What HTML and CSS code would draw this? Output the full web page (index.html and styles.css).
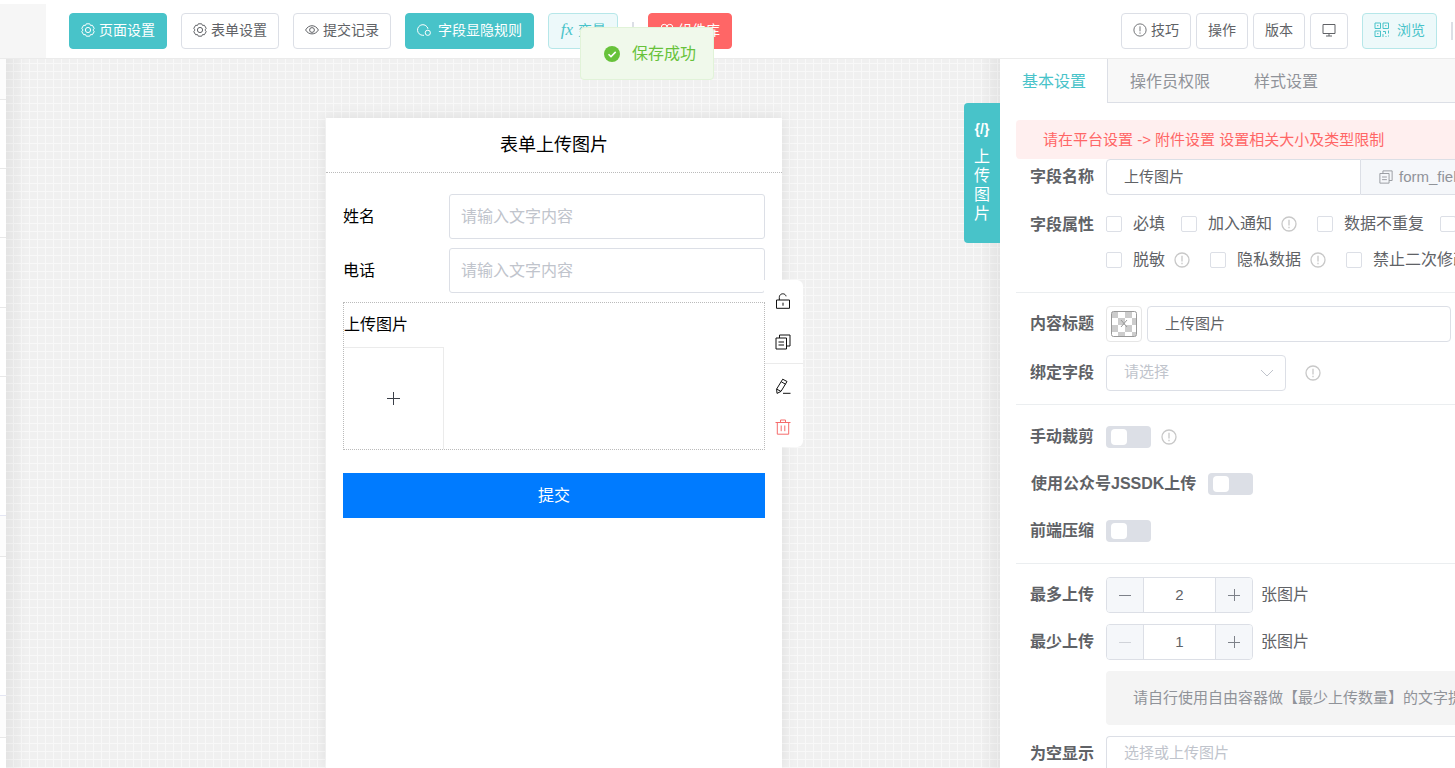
FILE: index.html
```html
<!DOCTYPE html>
<html lang="zh-CN">
<head>
<meta charset="utf-8">
<title>表单上传图片</title>
<link rel="stylesheet" href="styles.css">
</head>
<body>
<svg class="defs" aria-hidden="true">
  <symbol id="i-gear" viewBox="0 0 14 14"><path d="M5.300.8h3.400l.8 1.600 1.900-.1 1.800 3-1 1.500v.4l1 1.500-1.800 3-1.900-.1-.8 1.600H5.300l-.8-1.600-1.900.1-1.800-3 1-1.500v-.4l-1-1.500 1.800-3 1.900.1z"/><circle cx="7" cy="7" r="2.600"/></symbol>
  <symbol id="i-info" viewBox="0 0 16 16"><circle cx="8" cy="8" r="7"/><path d="M8 3.800v5.700M8 10.800v1.500"/></symbol>
  <symbol id="i-copy" viewBox="0 0 16 16"><path d="M1 4h10.500v11H1zM4.500 4V1H15v11h-3.500M3.500 8H9M3.500 11H9"/></symbol>
</svg>

<header class="topbar">
  <div class="corner"></div>
  <nav class="tools">
    <button class="btn primary"><svg class="ic"><use href="#i-gear"/></svg>页面设置</button>
    <button class="btn"><svg class="ic"><use href="#i-gear"/></svg>表单设置</button>
    <button class="btn"><svg class="ic" viewBox="0 0 14 14"><path d="M.6 7C3.600 1.300 10.400 1.300 13.400 7 10.400 12.200 3.600 12.200.6 7z"/><circle cx="7" cy="7" r="2.400"/></svg>提交记录</button>
    <button class="btn primary wide"><svg class="ic" viewBox="0 0 14 14"><path d="M7 12.300H5.800A5.300 5.300 0 1 1 11 5.800"/><circle cx="10.800" cy="9.800" r="2.600"/></svg>字段显隐规则</button>
    <button class="btn soft"><i class="fx">fx</i>变量</button>
    <span class="bar"></span>
    <button class="btn danger"><svg class="ic" viewBox="0 0 14 14"><circle cx="4.200" cy="4.200" r="2.900"/><circle cx="9.800" cy="4.200" r="2.900"/><circle cx="4.200" cy="9.800" r="2.900"/><circle cx="9.800" cy="9.800" r="2.900"/></svg>组件库</button>
  </nav>
  <nav class="actions">
    <button class="btn"><svg class="ic"><use href="#i-info"/></svg>技巧</button>
    <button class="btn">操作</button>
    <button class="btn">版本</button>
    <button class="btn" aria-label="预览"><svg class="ic" viewBox="0 0 14 14"><path d="M1 1.500h12v9H1zM7 10.500v2.500M4 13h6"/></svg></button>
    <button class="btn soft browse"><svg class="ic qr" viewBox="0 0 16 16"><path d="M1 1h5.500v5.500H1zM9 1h5.500v5.500H9zM1 9h5.500v5.500H1zM3 3.700h1.500M11 3.700h1.500M3 11.700h1.500M9 9.500h2.500v2.500M14.500 8.500v3M9 12v3M11.500 14.500h1M14 14h1"/></svg>浏览</button>
    <span class="bar"></span>
  </nav>
</header>

<div class="toast" role="status"><svg viewBox="0 0 16 16"><circle cx="8" cy="8" r="8"/><path d="M4.500 8.200 7 10.600l4.700-4.700"/></svg>保存成功</div>

<div class="work">
  <aside class="strip"></aside>
  <main class="canvas">
    <section class="phone">
      <h1>表单上传图片</h1>
      <form class="form">
        <div class="line"><label for="name">姓名</label><input id="name" placeholder="请输入文字内容"></div>
        <div class="line"><label for="tel">电话</label><input id="tel" placeholder="请输入文字内容"></div>
        <div class="picked">
          <span class="caption">上传图片</span>
          <button type="button" class="upload" aria-label="添加图片"><svg viewBox="0 0 13 13"><path d="M6.500 0v13M0 6.500h13"/></svg></button>
          <div class="menu">
            <button type="button" aria-label="锁定"><svg viewBox="0 0 16 16"><path d="M1.500 7h13v8.300h-13zM4.300 7V4.500C4.300-.2 10.500-.2 11 3.300M8 9.700v3"/></svg></button>
            <button type="button" aria-label="复制"><svg><use href="#i-copy"/></svg></button>
            <hr>
            <button type="button" aria-label="编辑"><svg viewBox="0 0 16 16"><path d="M7.700 1.200 12 3.500 6 13.400l-4 2-.4-4.300zM6.300 3.800l4.200 2.400M1.600 11.100 6 13.400M8 15.300h7.500"/></svg></button>
            <button type="button" class="del" aria-label="删除"><svg viewBox="0 0 16 16"><path d="M.5 3.500h15M2.300 3.500v11.700h11.400V3.500M5.500 3.300V1h5v2.300M6.200 6.500v5.700M9.800 6.500v5.700"/></svg></button>
          </div>
        </div>
        <button type="button" class="submit">提交</button>
      </form>
    </section>
    <div class="tag"><b>{/}</b><span>上传图片</span></div>
  </main>

  <aside class="panel">
    <div class="tabs">
      <button class="on">基本设置</button><button>操作员权限</button><button>样式设置</button>
    </div>
    <div class="settings">
      <p class="warn">请在平台设置 -&gt; 附件设置 设置相关大小及类型限制</p>

      <div class="group first">
        <div class="row">
          <label class="lb" for="fname">字段名称</label>
          <div class="joined"><input id="fname" class="box" value="上传图片"><span class="addon"><svg class="ic"><use href="#i-copy"/></svg>form_field</span></div>
        </div>
        <div class="row">
          <span class="lb">字段属性</span>
          <div class="checks">
            <div class="checkline">
              <label><input type="checkbox">必填</label>
              <label><input type="checkbox">加入通知</label><svg class="tip"><use href="#i-info"/></svg>
              <label><input type="checkbox">数据不重复</label>
              <label><input type="checkbox" aria-label="其他"></label>
            </div>
            <div class="checkline">
              <label><input type="checkbox">脱敏</label><svg class="tip"><use href="#i-info"/></svg>
              <label><input type="checkbox">隐私数据</label><svg class="tip"><use href="#i-info"/></svg>
              <label><input type="checkbox">禁止二次修改</label>
            </div>
          </div>
        </div>
      </div>

      <div class="group loose">
        <div class="row">
          <label class="lb" for="title">内容标题</label>
          <button class="color" aria-label="颜色"><svg viewBox="0 0 26 26"><path class="chk" d="M1 1h6v6H1zM14 1h7v6h-7zM7 7h7v7H7zM21 7h4v7h-4zM1 14h6v7H1zM14 14h7v7h-7zM7 21h7v4H7zM21 21h4v4h-4z"/><rect x=".5" y=".5" width="25" height="25" rx="2"/><path d="m10 9 6 7M16 9l-6 7"/></svg></button>
          <input id="title" class="box title" value="上传图片">
        </div>
        <div class="row">
          <label class="lb" for="bind">绑定字段</label>
          <div class="select"><select id="bind"><option>请选择</option></select><svg viewBox="0 0 14 8"><path d="m1 1 6 6 6-6"/></svg></div>
          <svg class="tip far"><use href="#i-info"/></svg>
        </div>
      </div>

      <div class="group tight">
        <div class="row"><label class="lb" for="s1">手动裁剪</label><input id="s1" type="checkbox" role="switch" class="switch"><svg class="tip near"><use href="#i-info"/></svg></div>
        <div class="row"><label class="lb long" for="s2">使用公众号JSSDK上传</label><input id="s2" type="checkbox" role="switch" class="switch"></div>
        <div class="row"><label class="lb" for="s3">前端压缩</label><input id="s3" type="checkbox" role="switch" class="switch"></div>
      </div>

      <div class="group last">
        <div class="row"><label class="lb" for="max">最多上传</label>
          <div class="step"><button aria-label="减少"><svg viewBox="0 0 12 12"><path d="M0 6.500h12"/></svg></button><input id="max" value="2"><button aria-label="增加"><svg viewBox="0 0 12 12"><path d="M0 6.500h12M6.500 0v12"/></svg></button></div><span class="unit">张图片</span></div>
        <div class="row"><label class="lb" for="min">最少上传</label>
          <div class="step"><button aria-label="减少" disabled><svg viewBox="0 0 12 12"><path d="M0 6.500h12"/></svg></button><input id="min" value="1"><button aria-label="增加"><svg viewBox="0 0 12 12"><path d="M0 6.500h12M6.500 0v12"/></svg></button></div><span class="unit">张图片</span></div>
        <div class="row"><span class="lb"></span><p class="note">请自行使用自由容器做【最少上传数量】的文字提示</p></div>
        <div class="row"><label class="lb" for="empty">为空显示</label><input id="empty" class="box bleed" placeholder="选择或上传图片"></div>
      </div>
    </div>
  </aside>
</div>
</body>
</html>
```
FILE: styles.css
```css
* { box-sizing: border-box; }
body {
  margin: 0;
  height: 100vh;
  display: flex;
  flex-direction: column;
  overflow: hidden;
  position: relative;
  background: #fff;
  color: #606266;
  font: 16px/20px "Liberation Sans", "Noto Sans CJK SC", sans-serif;
}
button, input, select { font: inherit; color: inherit; margin: 0; }
button { padding: 0; border: 0; background: none; cursor: pointer; }
input::placeholder { color: #c0c4cc; opacity: 1; }
svg { fill: none; stroke: currentColor; flex: none; }
.defs { position: absolute; width: 0; height: 0; }
.ic { width: 14px; height: 14px; display: block; }

/* top bar */
.topbar {
  flex: none;
  height: 59px;
  display: flex;
  align-items: center;
  border-bottom: 1px solid #ebebeb;
  padding-top: 4px;
}
.corner { width: 46px; align-self: stretch; background: #f6f6f6; margin-right: 23px; }
.tools, .actions { display: flex; align-items: center; margin-bottom: 1px; }
.tools { gap: 14px; }
.actions { gap: 5px; margin-left: auto; padding-right: 2px; }
.btn {
  height: 36px;
  padding: 0 11px 2px;
  display: flex;
  align-items: center;
  gap: 4px;
  border: 1px solid #dcdfe6;
  border-radius: 4px;
  background: #fff;
  font-size: 14px;
  white-space: nowrap;
}
.btn.primary { background: #48c3c9; border-color: #48c3c9; color: #fff; }
.btn.wide { gap: 7px; }
.btn.soft { background: #edf9fa; border-color: #b6e7e9; color: #48c3c9; }
.btn.danger { background: #ff6666; border-color: #ff6666; color: #fff; }
.btn.browse { gap: 7px; margin: 0 9px; }
.qr { width: 16px; height: 16px; }
.bar { width: 2px; height: 18px; background: #dcdfe6; }
.fx { width: 14px; font: italic 17px/20px "Liberation Serif", serif; }

.toast {
  position: absolute;
  z-index: 5;
  left: 580px;
  top: 27px;
  height: 53px;
  padding: 0 17px 0 23px;
  display: flex;
  align-items: center;
  gap: 12px;
  border: 1px solid #e1f3d8;
  border-radius: 4px;
  background: #f0f9eb;
  color: #67c23a;
}
.toast svg { width: 16px; height: 16px; }
.toast circle { fill: #67c23a; stroke: none; }
.toast path { stroke: #fff; stroke-width: 1.5; }

/* work area */
.work { flex: 1; min-height: 0; display: grid; grid-template-columns: 6px minmax(0, 1fr) 455px; }
.strip {
  background: linear-gradient(
    #fcfcfc 40px, #e8e8e8 40px 41px,
    #fff 41px 109px, #e8e8e8 109px 110px,
    #fff 110px 178px, #e8e8e8 178px 179px,
    #fff 179px 248px, #e8e8e8 248px 249px,
    #fff 249px 317px, #e8e8e8 317px 318px,
    #fff 318px 456px, #e4e6f3 456px 457px,
    #fcfcfc 457px 497px, #e8e8e8 497px 498px,
    #fff 498px 636px, #e4e6f3 636px 637px,
    #fcfcfc 637px 678px, #e8e8e8 678px 679px,
    #fff 679px);
}
.canvas {
  position: relative;
  display: flex;
  justify-content: center;
  padding: 59px 0 0 102px;
  overflow: hidden;
  background-color: #f0f0f0;
  background-image:
    linear-gradient(90deg, rgba(0, 0, 0, .05), transparent 20px, transparent calc(100% - 20px), rgba(0, 0, 0, .05)),
    linear-gradient(#f8f8f8 1px, transparent 1px),
    linear-gradient(90deg, #f8f8f8 1px, transparent 1px);
  background-size: auto, 8px 8px, 8px 8px;
  background-position: 0 0, 0 4px, 7px 0;
}
.phone {
  width: 456px;
  background: #fff;
  color: #000;
  box-shadow: 0 0 14px rgba(0, 0, 0, .08);
}
.phone h1 {
  margin: 0;
  height: 55px;
  border-bottom: 1px dotted #bbb;
  font-size: 18px;
  line-height: 55px;
  font-weight: 400;
  text-align: center;
}
.form { padding: 21px 17px; display: flex; flex-direction: column; gap: 9px; }
.line { display: flex; align-items: center; }
.line label { width: 106px; }
.line input {
  flex: 1;
  min-width: 0;
  height: 45px;
  padding: 0 11px;
  border: 1px solid #dcdfe6;
  border-radius: 3px;
  background: #fff;
}
.picked {
  position: relative;
  border: 1px dotted #bbb;
  display: flex;
  flex-direction: column;
  align-items: flex-start;
}
/* keeps the selection outline above the menu edge */
.picked::after {
  content: "";
  position: absolute;
  inset: -1px;
  border-right: 1px dotted #bbb;
  pointer-events: none;
}
.caption { line-height: 44px; }
.upload {
  width: 100px;
  height: 102px;
  display: grid;
  place-items: center;
  border: 1px solid #ebebeb;
  border-width: 1px 1px 0 0;
}
.upload svg { width: 13px; height: 13px; stroke: #3a3f48; }
.menu {
  position: absolute;
  left: 100%;
  top: -23px;
  width: 39px;
  background: #fff;
  border-radius: 0 6px 6px 0;
}
.menu button { width: 38px; height: 41px; display: grid; place-items: center; }
.menu svg { width: 16px; height: 16px; stroke: #111; }
.menu .del svg { stroke: #f56c6c; }
.menu hr { margin: 1px 0; border: 0; border-top: 1px solid #ebebeb; }
.submit { height: 45px; margin-top: 14px; background: #007bff; color: #fff; }
.tag {
  position: absolute;
  right: 0;
  top: 44px;
  width: 36px;
  padding: 16px 0 20px;
  display: flex;
  flex-direction: column;
  align-items: center;
  gap: 8px;
  border-radius: 4px 0 0 4px;
  background: #48c3c9;
  color: #fff;
}
.tag b { font-size: 14px; }
.tag span { width: 16px; line-height: 19px; }

/* settings panel */
.panel { background: #fff; overflow: hidden; }
.tabs { height: 44px; display: flex; background: #f8f8f8; border-bottom: 1px solid #dcdfe6; }
.tabs button { padding: 2px 22px 0; color: #909399; white-space: nowrap; }
.tabs .on {
  height: 44px;
  padding: 2px 21px 0 22px;
  background: #fff;
  color: #48c3c9;
  border-right: 1px solid #dcdfe6;
}
.settings { padding: 17px 0 0 16px; }
.warn {
  margin: 0;
  height: 39px;
  padding: 0 27px;
  border-radius: 4px 0 0 4px;
  background: #ffefef;
  color: #ff6666;
  font-size: 15px;
  line-height: 39px;
  white-space: nowrap;
}
.group { display: flex; flex-direction: column; gap: 12px; padding: 13px 0; border-bottom: 1px solid #ebeef0; }
.group.first { padding-top: 0; }
.group.loose { gap: 13px; }
.group.tight { gap: 11px; padding: 14px 0; }
.group.last { gap: 11px; border: 0; }
.row { display: flex; align-items: center; min-height: 36px; }
.lb {
  flex: 0 0 90px;
  padding-right: 12px;
  text-align: right;
  font-weight: 700;
  white-space: nowrap;
  align-self: flex-start;
  line-height: 36px;
}
.lb.long { flex: none; padding: 0 12px 0 15px; }
.box {
  flex: 1;
  min-width: 0;
  height: 36px;
  padding: 0 17px 4px;
  border: 1px solid #dcdfe6;
  border-radius: 4px;
  background: #fff;
  font-size: 15px;
}
.title { margin-right: 4px; }
.bleed { border-right: 0; border-radius: 4px 0 0 0; }
.joined { flex: 1; min-width: 0; display: flex; }
.joined .box { border-radius: 4px 0 0 4px; }
.addon {
  flex: 0 0 94px;
  overflow: hidden;
  display: flex;
  align-items: center;
  gap: 6px;
  padding-left: 18px;
  border: solid #dcdfe6;
  border-width: 1px 0;
  background: #f5f7fa;
  color: #909399;
  font-size: 15px;
}
.checks { flex: 1; min-width: 0; overflow: hidden; }
.checkline { display: flex; align-items: center; height: 36px; padding-bottom: 2px; white-space: nowrap; }
.checkline label { flex: none; display: flex; align-items: center; gap: 11px; margin-right: 16px; }
.checkline input { appearance: none; width: 16px; height: 16px; border: 1px solid #dcdfe6; border-radius: 2px; background: #fff; }
.tip { width: 16px; height: 16px; color: #c8c8c8; stroke-width: 1.3; }
.checkline .tip { margin: 0 20px 0 -7px; }
.far { margin-left: 19px; }
.near { margin-left: 10px; }
.color {
  width: 36px;
  height: 36px;
  margin-right: 5px;
  display: grid;
  place-items: center;
  border: 1px solid #e6e6e6;
  border-radius: 4px;
}
.color svg { width: 26px; height: 26px; stroke: #999; }
.color .chk { fill: #ccc; stroke: none; }
.select { position: relative; width: 180px; }
.select select {
  appearance: none;
  display: block;
  width: 100%;
  height: 36px;
  padding: 0 17px 2px;
  border: 1px solid #dcdfe6;
  border-radius: 4px;
  background: #fff;
  color: #c0c4cc;
  font-size: 15px;
}
.select svg { position: absolute; right: 12px; top: 14px; width: 14px; height: 8px; stroke: #c0c4cc; pointer-events: none; }
.switch {
  appearance: none;
  width: 45px;
  height: 22px;
  padding: 3px 5px;
  border-radius: 4px;
  background: #dcdfe6;
}
.switch::before { content: ""; display: block; width: 16px; height: 16px; border-radius: 4px; background: #fff; }
.switch:checked { background: #48c3c9; }
.step { width: 147px; height: 36px; display: flex; border: 1px solid #dcdfe6; border-radius: 4px; overflow: hidden; }
.step button { flex: 0 0 36px; display: grid; place-items: center; background: #f5f7fa; }
.step svg { width: 12px; height: 12px; stroke: #7d8189; }
.step button:disabled svg { stroke: #d0d3d9; }
.step input {
  flex: 1;
  min-width: 0;
  border: solid #dcdfe6;
  border-width: 0 1px;
  padding: 0;
  text-align: center;
  background: #fff;
  font-size: 15px;
}
.unit { margin-left: 8px; line-height: 34px; }
.note {
  flex: 1;
  min-width: 0;
  margin: 0;
  padding-left: 27px;
  border-radius: 4px 0 0 4px;
  background: #f4f4f4;
  color: #909399;
  font-size: 15px;
  line-height: 54px;
  white-space: nowrap;
  overflow: hidden;
}
```
